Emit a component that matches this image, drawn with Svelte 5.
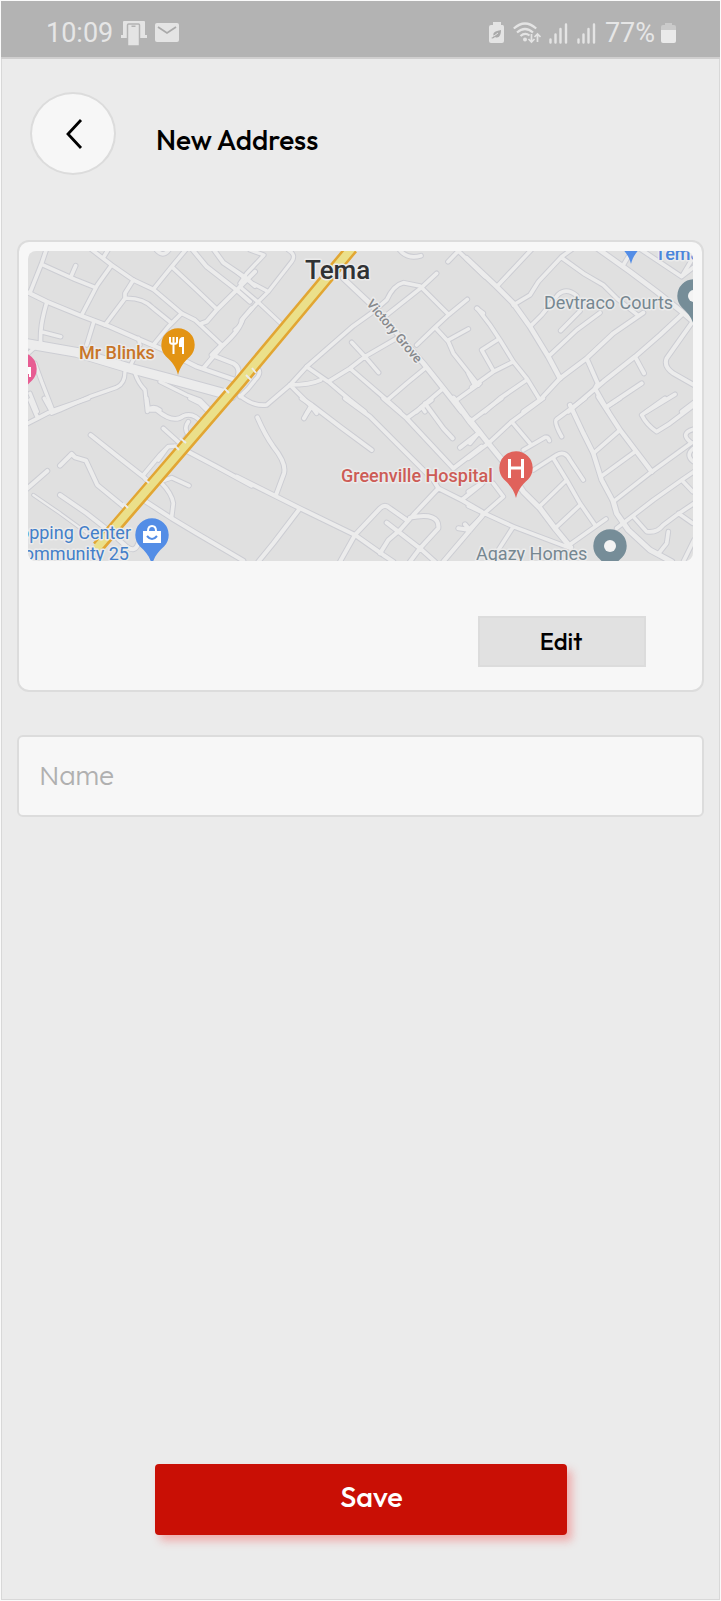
<script>
  let name = $state('');

  // Streets are kept per map tile, in tile units (three to a map pixel).
  const tiles = [
    { x: 10, y: 230, roads: [
      [11, 'M112 50 95 100 60 188 M95 103 195 148 255 172 M185 135 197 107 M240 55 305 105 370 150 430 178 515 250 555 270 635 345 M305 105 262 165 215 255 M283 78 300 50'],
      [12, 'M55 188 110 215 215 258 300 290 380 325 450 355 560 410 690 455'],
      [11, 'M110 218C95 270 90 300 92 345 M100 307 152 320 M250 280 230 345 M370 150 345 190V205L285 285 M345 205Q400 203 430 235L482 277 M515 250 475 290 430 345 M430 178 485 110 535 50 M435 55Q460 88 480 55 M485 110 560 180 620 237'],
      [12, 'M540 50 590 110 680 180 720 215 M605 50 640 98 705 142 735 168 M735 125 685 175 620 240 590 275 575 280 M725 235 695 270Q695 295 635 350L580 415 M635 345 605 375 670 400Q695 415 680 448'],
      [27, 'M45 340 200 367 350 412 500 452 665 497'],
      [10, 'M55 370 75 352 M75 400 95 455 130 545 M60 490 82 545 M345 425Q345 460 320 472L240 500 150 540 125 550 M375 430Q385 460 405 480L412 545 M450 455 530 495 570 510 605 545 M385 325 390 345 M360 410 372 385 M412 540Q430 525 450 540']
    ] },
    { x: 240, y: 230, roads: [
      [10, 'M30 60 72 75 20 130 0 160 M145 60Q170 75 155 95L85 185 55 215 10 265Q5 285 -15 300 M42 162 85 185 M-10 125 10 142 M0 170 55 217 130 287'],
      [14, 'M310 145 395 225 480 320 550 400 610 475 665 545'],
      [11, 'M475 55Q500 90 543 77 M624 95 655 63 735 140 M590 130 545 172 440 255 M400 245 340 288 200 410 150 465 M400 245 440 210Q460 165 490 158L540 168 625 253 M682 208 625 255 585 292 530 345 M585 292 625 335 640 370 715 465 M625 330 685 297 M710 235 730 250'],
      [11, 'M335 337 375 380 416 428 M470 325 375 380 330 415 265 455 M200 410 265 455 330 510 375 545 M150 465Q210 465 242 450 M150 465 215 530 230 550 M330 415 440 510 480 545 M555 415 500 460 440 512 M610 475 545 530 530 545 M650 510 720 460 M215 530 200 550 M545 530 555 545'],
      [11, 'M48 412Q70 425 45 450 28 475 0 500 M0 497Q40 530 80 525L150 465']
    ] },
    { x: 470, y: 230, roads: [
      [14, 'M-10 85 80 170 130 220 180 290 235 380 270 445 M375 50 480 125 560 185 635 245 670 275'],
      [11, 'M188 55 80 170 M310 55 275 80 205 155 180 195 130 225 M275 83 340 130 400 165 440 205 505 257 M460 105 475 80 M500 50 635 140 670 112 M635 140 665 90 M180 290 215 255 265 193Q290 172 320 197 M330 243 272 302 M390 248 320 300 235 380'],
      [12, 'M520 248 430 310 350 385 270 445 210 510 160 545 M640 250 570 315 495 380 400 455 295 545 M350 385 383 460 375 475 415 545 M495 380 522 430 M668 275 590 385Q580 410 610 430L675 467 M410 530 515 460'],
      [11, 'M22 235 60 285 90 330 130 395 170 445 210 510 M85 328 35 360 70 422 M130 395 70 425 5 472 M170 450 90 505 45 545 M-5 430 15 468 M530 545 615 493 M635 545 675 515']
    ] },
    { x: 10, y: 400, roads: [
      [11, 'M60 0 82 52 M103 -5 125 35 M235 -5 125 33 50 72 M410 -5 415 30 440 30Q490 72 520 48 550 35 578 70 M540 -5 570 10 600 40'],
      [12, 'M242 105 330 175 400 230 418 247 M150 197 185 162 195 172 228 182 262 255 350 327 M112 213 50 267 M150 285 230 340 300 395 350 440Q375 460 385 430 M525 150 620 200 725 257 M400 300 485 355 560 400 700 482'],
      [7, 'M70 285 150 340 260 420'],
      [11, 'M535 65Q520 85 535 105L510 135 M460 85 510 130 M400 225 450 165 475 140 505 138 M445 180 470 145 M450 245 485 233 537 257 M455 250Q485 280 490 310L485 350']
    ] },
    { x: 240, y: 400, roads: [
      [12, 'M-10 230 110 290 180 325 345 405 430 465 460 485 M52 52Q75 105 100 140 140 190 132 220L108 285 M180 325 100 430 55 485 M185 -5 215 15 300 80 395 150 M215 15 192 55'],
      [12, 'M315 -5 390 50 470 130 580 240 595 265 M430 -5 500 55 570 130 640 205 M575 0 500 55 M555 10 610 85 638 115 M715 100 660 143 M640 205 725 140'],
      [16, 'M640 -5 690 65 720 100'],
      [12, 'M595 265 520 345 480 390 445 420 420 460 M595 265 665 300 725 335 M665 300 725 252 M345 405 420 325Q435 310 450 325L500 360 M345 405 300 485 M440 368 540 445 585 485 M510 353Q600 335 595 385L540 445 510 485 M655 385 690 390 M675 373 690 390 M725 350 610 485']
    ] },
    { x: 470, y: 400, roads: [
      [11, 'M0 65 60 20 95 -5 M220 -5 125 65 55 130 -5 175 M0 130 25 100 M125 65 180 130 M160 150 225 112Q235 110 238 122 M345 -5 260 58Q250 65 275 110'],
      [15, 'M0 60 55 130 100 185 160 275 210 325 255 385 302 442 M430 305 440 340 475 390 540 450 605 485'],
      [13, 'M300 15 340 100 370 160 395 240 430 305 M385 -10 450 90 545 215'],
      [11, 'M450 90 370 160 M495 155 395 228 M665 128 545 215 430 305 M415 18 450 -5 M585 -5 515 45Q530 75 560 95L600 70 670 17 M670 88Q630 100 660 125 M670 145Q645 165 670 185 M675 213 635 240 550 300 440 385 M635 240 668 275'],
      [11, 'M490 350 530 395Q560 400 580 375L620 345 675 308 M625 340 668 370 M595 395 590 430 565 462 M672 420 640 485 M250 175 290 240 330 310 375 375 M190 210 260 165Q285 150 300 180L340 240 M290 240 210 318 M330 315 255 385 M408 357 302 432'],
      [11, 'M302 445 130 380 -5 318 M130 380 85 450 M35 347 100 290 70 250 M40 345 -5 390 M-5 275 50 240']
    ] }
  ];

  const pins = [
    { x: 178, y: 345, color: '#e39414', kind: 'food' },
    { x: 152, y: 535, color: '#538de6', kind: 'shop' },
    { x: 516, y: 468, color: '#e0625b', kind: 'hospital' },
    { x: 610, y: 546, color: '#768d98', kind: 'dot' },
    { x: 694, y: 296, color: '#768d98', kind: 'dot' },
    { x: 631, y: 234, color: '#538de6', kind: 'none' },
    { x: 20, y: 369, color: '#e75d93', kind: 'bed' }
  ];
</script>

{#snippet streets(extra)}
  {#each tiles as t}
    <g transform="translate({t.x} {t.y}) scale(0.3333)">
      {#each t.roads as [w, d]}
        <path {d} stroke-width={w + extra} />
      {/each}
    </g>
  {/each}
{/snippet}

<div class="screen">
  <div class="status">
    <div class="group">
      <span class="clock">10:09</span>
      <svg width="26" height="26" viewBox="0 0 26 26" aria-hidden="true">
        <path fill="#e4e4e4" d="M3 1h20q1 0 1 1v13h2v3H0v-3h2V2q0-1 1-1z" />
        <path fill="#e4e4e4" stroke="#b3b3b3" stroke-width="1.500" d="M6.500 5q0-1 1-1h10q1 0 1 1v21h-12z" />
        <path fill="#b3b3b3" d="M10.500 5.500h4v1.500h-4z" />
      </svg>
      <svg width="24" height="20" viewBox="0 0 24 20" aria-hidden="true">
        <rect width="24" height="19" rx="2" fill="#e4e4e4" />
        <path d="M3 4l9 6 9-6" fill="none" stroke="#aaa" stroke-width="1.800" />
      </svg>
    </div>
    <div class="group right">
      <svg width="16" height="22" viewBox="0 0 16 22" aria-hidden="true">
        <path fill="#e4e4e4" d="M4 0h8v3h1.500Q15 3 15 5v14q0 2-2 2H2q-2 0-2-2V5q0-2 2-2h2z" />
        <path fill="#aaa" d="M2 16c2-1 2-1 3-2-2-3 1-5 7-6 0 5-2 9-6 7-1 1-2 2-4 1z" />
        <path d="M5 14l4-3" stroke="#e4e4e4" />
      </svg>
      <svg width="28" height="22" viewBox="0 0 28 22" aria-hidden="true">
        <g fill="none" stroke="#e4e4e4" stroke-width="2.200">
          <path d="M.8 6.500Q12-3.500 23.200 6.500M4 10.500q8-7 16 0M7.500 14q4.500-4 9-.5" />
          <path stroke-width="1.700" d="M18.500 12v8M15.500 17l3 3 3-3M24.500 20v-8M21.500 15l3-3 3 3" />
        </g>
        <circle cx="12" cy="17.500" r="2" fill="#e4e4e4" />
      </svg>
      {#each [0, 1] as sim (sim)}
        <svg class="signal" width="19" height="21" viewBox="0 0 19 21" aria-hidden="true">
          <path d="M1.500 19.500v-3M6.500 19.500v-8M11.500 19.500V6M17 19.500V1.500" stroke="#e4e4e4" stroke-width="2.400" stroke-linecap="round" />
        </svg>
      {/each}
      <span class="clock">77%</span>
      <svg width="15" height="21" viewBox="0 0 15 21" aria-hidden="true">
        <path fill="#cacaca" d="M4 0h7v2h2q2 0 2 2v4H0V4q0-2 2-2h2z" />
        <path fill="#eaeaea" d="M0 7h15v11q0 2-2 2H2q-2 0-2-2z" />
      </svg>
    </div>
  </div>

  <header>
    <button class="back" type="button" aria-label="Back">
      <svg width="18" height="32" viewBox="0 0 18 32" aria-hidden="true">
        <path d="M16 2 3 16l13 14" fill="none" stroke="#000" stroke-width="2.800" />
      </svg>
    </button>
    <h1>New Address</h1>
  </header>

  <main>
    <section class="card">
      <svg class="map" viewBox="28 251 665 310" role="img" aria-label="Map">
        <rect x="28" y="251" width="665" height="310" fill="#e0e0e0" />
        <g class="road casing">{@render streets(6)}</g>
        <g class="road fill">{@render streets(0)}</g>
        <g fill="none">
          <path d="M352 248 240 382 98 547" stroke="#e2a633" stroke-width="13" />
          <path d="M352 248 240 382 96 549" stroke="#ebe08a" stroke-width="8" />
          <path d="M252 368 256 373M224 388 229 393M246 375 251 380M174 445 179 450M180 438 186 443M144 479 149 483M123 503 128 508" stroke="#ebebeb" stroke-width="2" />
        </g>
        {#each pins as p}
          <g transform="translate({p.x} {p.y})">
            <path fill={p.color} d="M0 30C-2 22-6 17-12 11.600A16.700 16.700 0 1 1 12 11.600C6 17 2 22 0 30z" />
            {#if p.kind === 'food'}
              <g fill="none" stroke="#fff" stroke-width="2">
                <path d="M-8-8v5q0 2 3.500 2T-1-3v-5M-4.500-8V9" />
                <path d="M5 9V-7q-3 0-3 4v4h3" fill="#fff" />
              </g>
            {:else if p.kind === 'shop'}
              <path fill="#fff" d="M-9-4H9V8H-9z" />
              <path fill="none" stroke="#fff" stroke-width="2" d="M-4-4q0-5 4-5t4 5" />
              <path fill="none" stroke={p.color} stroke-width="2" d="M-5 1q5 6 10 0" />
            {:else if p.kind === 'hospital'}
              <path fill="none" stroke="#fff" stroke-width="3" d="M-6.500-9V10M6.500-9V10M-6.500 0h13" />
            {:else if p.kind === 'dot'}
              <circle r="6" fill="#f3f3f3" />
            {:else if p.kind === 'bed'}
              <path fill="#fff" d="M2-2h9V8H9V5H2z" />
            {/if}
          </g>
        {/each}
        <g class="labels">
          <text x="305" y="279" class="city">Tema</text>
          <text x="79" y="359" class="strong" fill="#c87529">Mr Blinks</text>
          <text x="544" y="309" fill="#768791">Devtraco Courts</text>
          <text x="341" y="482" class="strong" fill="#cd5c56">Greenville Hospital</text>
          <text x="476" y="560" fill="#768791">Agazy Homes</text>
          <text x="131" y="539" fill="#437fc9" text-anchor="end">Shopping Center</text>
          <text x="129" y="560" fill="#437fc9" text-anchor="end">Community 25</text>
          <text x="655" y="260" class="strong" fill="#4a86dc">Tema</text>
          <text class="street" transform="translate(366 304) rotate(50)">Victory Grove</text>
        </g>
      </svg>
      <div class="actions">
        <button class="edit" type="button">Edit</button>
      </div>
    </section>
    <input type="text" placeholder="Name" aria-label="Name" bind:value={name} />
  </main>

  <footer>
    <button class="save" type="button">Save</button>
  </footer>
</div>

<style>
  :global(body) {
    margin: 0;
    background: #fafafa;
  }
  .screen {
    box-sizing: border-box;
    min-height: calc(100vh - 2px);
    margin: 1px;
    display: flex;
    flex-direction: column;
    background: #ebebeb;
    border: 1px solid #d8d8d8;
    border-top: 0;
    font-family: Outfit, Lato, sans-serif;
  }
  button,
  input {
    font-family: inherit;
    box-sizing: border-box;
  }
  .status {
    display: flex;
    justify-content: space-between;
    height: 56px;
    margin: 0 -1px;
    padding: 8px 44px 0 45px;
    box-sizing: border-box;
    background: #b3b3b3;
    box-shadow: 0 2px 0 #d0cfcf;
    font-family: Roboto, sans-serif;
    color: #e6e6e6;
  }
  .group {
    display: flex;
    align-items: center;
    gap: 8px;
  }
  .clock {
    font-size: 27px;
    line-height: 32px;
  }
  .right .clock {
    margin-right: -2px;
  }
  .signal {
    margin-right: 1px;
  }
  header {
    display: flex;
    align-items: center;
    gap: 40px;
    padding: 35px 28px 0;
  }
  .back {
    width: 86px;
    height: 83px;
    padding: 0 0 0 2px;
    display: flex;
    align-items: center;
    justify-content: center;
    background: #f7f7f7;
    border: 2px solid #dcdcdc;
    border-radius: 50%;
  }
  h1 {
    margin: 0;
    padding-top: 12px;
    font-size: 28px;
    line-height: 36px;
    font-weight: 500;
    color: #000;
  }
  main {
    display: flex;
    flex-direction: column;
    gap: 43px;
    padding: 65px 15px 0;
  }
  .card {
    background: #f7f7f7;
    border: 2px solid #dcdcdc;
    border-radius: 12px;
    padding: 9px 9px 23px;
  }
  .map {
    display: block;
    width: 100%;
    height: auto;
    border-radius: 8px;
  }
  .road {
    fill: none;
    stroke-linecap: round;
    stroke-linejoin: round;
  }
  .casing {
    stroke: #cccdd3;
  }
  .fill {
    stroke: #ececec;
  }
  .labels {
    font-family: Roboto, sans-serif;
    font-size: 18px;
    paint-order: stroke;
    stroke: #ebebeb;
    stroke-width: 3px;
    stroke-linejoin: round;
  }
  .strong {
    font-weight: 500;
  }
  .city {
    font-size: 26px;
    font-weight: 500;
    fill: #303234;
  }
  .street {
    font-size: 13px;
    font-weight: 500;
    fill: #86888c;
  }
  .actions {
    display: flex;
    justify-content: flex-end;
    padding: 55px 47px 0 0;
  }
  .edit {
    width: 168px;
    height: 51px;
    padding: 0 2px 2px 0;
    background: #e1e1e1;
    border: 2px solid #dcdcdc;
    font-size: 24px;
    font-weight: 500;
    color: #000;
  }
  input {
    width: 100%;
    height: 82px;
    padding: 0 20px 2px;
    background: #f7f7f7;
    border: 2px solid #dcdcdc;
    border-radius: 6px;
    font-family: Lexend, Outfit, Lato, sans-serif;
    font-size: 26px;
    font-weight: 300;
    color: #333;
  }
  input::placeholder {
    color: #b0b0b0;
    opacity: 1;
  }
  footer {
    display: flex;
    justify-content: center;
    margin-top: auto;
    padding: 40px 16px 64px;
  }
  .save {
    width: 412px;
    height: 71px;
    padding: 0 0 6px 22px;
    background: #c90f05;
    border: 0;
    border-radius: 4px;
    box-shadow: 5px 6px 8px rgba(245, 60, 60, 0.35);
    font-size: 29px;
    font-weight: 500;
    color: #fff;
  }
</style>
